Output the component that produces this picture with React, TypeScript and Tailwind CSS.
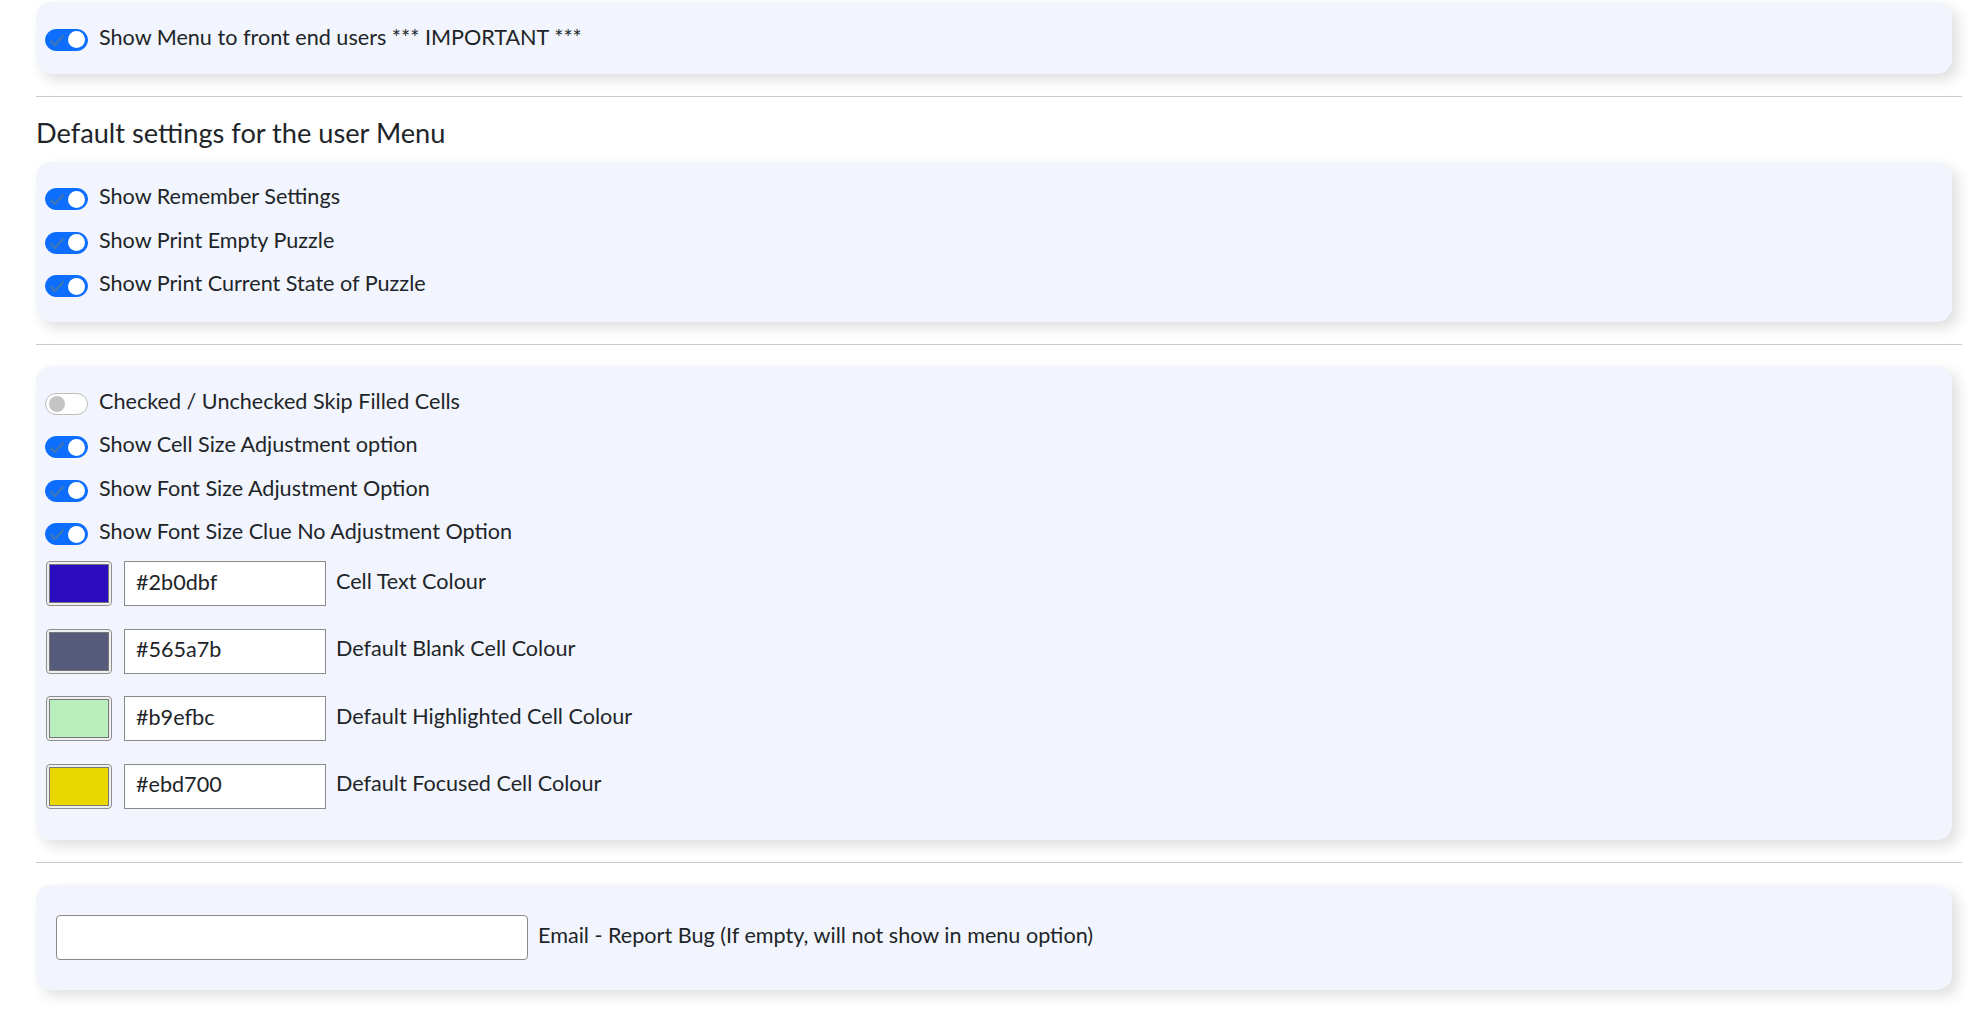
import React from 'react';

const font = { fontFamily: 'Lato, "Noto Sans", sans-serif' };

function Toggle({ on }: { on: boolean }) {
  if (!on) {
    return (
      <span className="relative inline-flex h-[22px] w-[43px] shrink-0 items-center rounded-full border border-[#bdbdbd] bg-white">
        <span className="ml-[3px] h-[16px] w-[16px] rounded-full bg-[#c4c4c4]" />
      </span>
    );
  }
  return (
    <span className="relative inline-flex h-[22px] w-[43px] shrink-0 items-center justify-end rounded-full border border-[#0d6efd] bg-[#0d6efd]">
      <svg className="absolute left-[3px] top-[3px]" width="16" height="15" viewBox="0 0 16 15">
        <path d="M2 8l4 4 8-9" fill="none" stroke="#3f76b4" strokeWidth="2.2" strokeLinecap="round" strokeLinejoin="round" />
      </svg>
      <span className="mr-[2px] h-[17px] w-[17px] rounded-full bg-white" />
    </span>
  );
}

function SwitchRow({ on, label }: { on: boolean; label: string }) {
  return (
    <div className="flex h-[43.5px] items-center gap-[11px]">
      <Toggle on={on} />
      <span className="-mt-[4px] text-[21.6px] leading-none text-[#212529]">{label}</span>
    </div>
  );
}

function ColourRow({ colour, label }: { colour: string; label: string }) {
  return (
    <div className="mb-[22.5px] flex h-[45px] items-center">
      <div className="flex h-[45px] w-[66px] shrink-0 items-stretch rounded-[4px] border border-[#8f8f8f] bg-[#efefef] p-[2px]">
        <div className="flex-1 border border-[#777]" style={{ backgroundColor: colour }} />
      </div>
      <div className="ml-[12px] flex h-[45px] w-[202px] items-center border border-[#8a8a8a] bg-white pb-[3px] pl-[11px] text-[21.6px] text-[#212529]">
        {colour}
      </div>
      <span className="ml-[10px] -mt-[4px] text-[21.6px] leading-none text-[#212529]">{label}</span>
    </div>
  );
}

const card = 'mr-[10px] rounded-[15px] bg-[#f2f5fd] shadow-[6px_6px_14px_rgba(0,0,0,0.13)]';

export default function App() {
  return (
    <div className="min-h-screen bg-white pb-10 pl-[36px] pr-[19px] pt-[2px]" style={font}>
      <div className={`${card} px-[9px] pb-[12px] pt-4`}>
        <SwitchRow on label="Show Menu to front end users *** IMPORTANT ***" />
      </div>
      <div className="mt-[22px] h-px bg-[#c8c9ca]" />
      <h2 className="mt-[21px] mb-[14px] text-[27.2px] leading-[30px] text-[#212529]">Default settings for the user Menu</h2>
      <div className={`${card} px-[9px] pb-[14px] pt-4`}>
        <SwitchRow on label="Show Remember Settings" />
        <SwitchRow on label="Show Print Empty Puzzle" />
        <SwitchRow on label="Show Print Current State of Puzzle" />
      </div>
      <div className="mt-[22px] h-px bg-[#c8c9ca]" />
      <div className={`${card} mt-[21px] px-[9px] pb-[9px] pt-4`}>
        <SwitchRow on={false} label="Checked / Unchecked Skip Filled Cells" />
        <SwitchRow on label="Show Cell Size Adjustment option" />
        <SwitchRow on label="Show Font Size Adjustment Option" />
        <SwitchRow on label="Show Font Size Clue No Adjustment Option" />
        <div className="mt-[5px] pl-px">
          <ColourRow colour="#2b0dbf" label="Cell Text Colour" />
          <ColourRow colour="#565a7b" label="Default Blank Cell Colour" />
          <ColourRow colour="#b9efbc" label="Default Highlighted Cell Colour" />
          <ColourRow colour="#ebd700" label="Default Focused Cell Colour" />
        </div>
      </div>
      <div className="mt-[22px] h-px bg-[#c8c9ca]" />
      <div className={`${card} mt-[22px] flex items-center px-5 py-[30px]`}>
        <div className="h-[45px] w-[472px] rounded-[4px] border border-[#8a8a8a] bg-white" />
        <span className="ml-[10px] -mt-[4px] text-[21.6px] leading-none text-[#212529]">Email - Report Bug (If empty, will not show in menu option)</span>
      </div>
    </div>
  );
}
